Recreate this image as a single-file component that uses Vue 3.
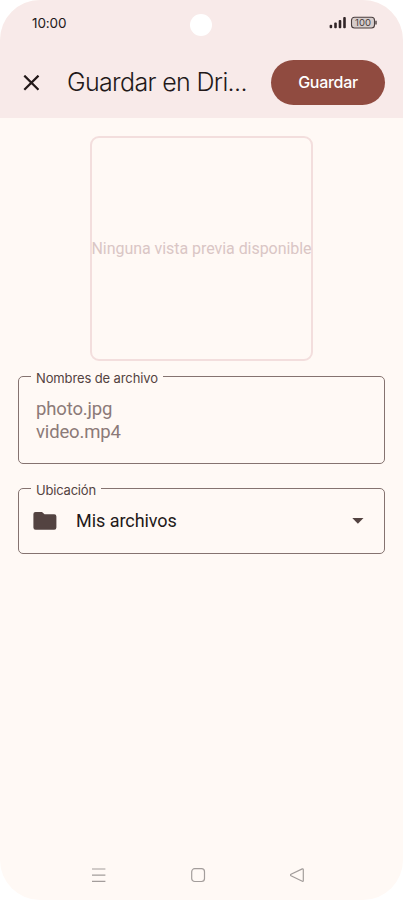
<script setup>
const files = ['photo.jpg', 'video.mp4']
</script>

<template>
  <main class="screen">
    <header class="top">
      <div class="status">
        <span class="time">10:00</span>
        <span class="camera"></span>
        <svg class="indicators" width="49" height="14" viewBox="0 0 49 14">
          <g fill="#302426">
            <rect x="1.6" y="8.8" width="2.6" height="3.4" rx="1" />
            <rect x="6.2" y="6.6" width="2.6" height="5.6" rx="1" />
            <rect x="10.7" y="4" width="2.6" height="8.2" rx="1" />
            <rect x="15.2" y="1" width="2.6" height="11.2" rx="1" />
          </g>
          <rect x="23.5" y="1.2" width="23" height="10.8" rx="3" fill="#d6cccb" stroke="#4a3f3f" stroke-width="1.1" />
          <path d="M48 4.8v3.8" stroke="#4a3f3f" stroke-width="1.4" />
          <text x="35" y="9.9" text-anchor="middle" class="percent">100</text>
        </svg>
      </div>
      <div class="bar">
        <svg class="close" width="17" height="16" viewBox="0 0 17 16">
          <path d="M1.3 0.6l14.2 14.2M15.5 0.6L1.3 14.8" stroke="#231919" stroke-width="2.2" fill="none" />
        </svg>
        <h1>Guardar en Dri...</h1>
        <button class="save">Guardar</button>
      </div>
    </header>

    <section class="content">
      <div class="preview"><span>Ninguna vista previa disponible</span></div>

      <fieldset class="field names">
        <legend>Nombres de archivo</legend>
        <div v-for="file in files" :key="file" class="file">{{ file }}</div>
      </fieldset>

      <fieldset class="field location">
        <legend>Ubicación</legend>
        <div class="row">
          <svg width="24" height="20" viewBox="0 0 24 20">
            <path d="M2.5 1H9l2.5 2.2h9.7a2.2 2.2 0 0 1 2.2 2.2v11.2a2.2 2.2 0 0 1-2.2 2.2H2.6a2.2 2.2 0 0 1-2.2-2.2V3.1A2.1 2.1 0 0 1 2.5 1z" fill="#534341" />
          </svg>
          <span class="place">Mis archivos</span>
          <svg class="arrow" width="12" height="6" viewBox="0 0 12 6">
            <path d="M0.3 0h11.2L5.9 5.8z" fill="#534341" />
          </svg>
        </div>
      </fieldset>
    </section>

    <nav class="nav">
      <svg width="16" height="16" viewBox="0 0 16 16"><path d="M1 2h13.4M1 8.2h13.4M1 14.4h13.4" /></svg>
      <svg width="16" height="16" viewBox="0 0 16 16"><rect x="1.7" y="1.7" width="12.8" height="12.8" rx="3" /></svg>
      <svg width="16" height="16" viewBox="0 0 16 16"><path d="M13.3 1.9L2 7.3q-1 .7 0 1.4l11.3 5.6q1 .3 1-.8V2.7q0-1.1-1-.8z" /></svg>
    </nav>
  </main>
</template>

<style>
body {
  margin: 0;
  background: #fff;
}
</style>

<style scoped>
.screen {
  box-sizing: border-box;
  width: 403px;
  height: 900px;
  display: flex;
  flex-direction: column;
  overflow: hidden;
  border-radius: 40px;
  background: #fff9f5;
  color: #231919;
  font-family: Roboto, "Liberation Sans", sans-serif;
}
.top {
  height: 118px;
  background: #f8eae9;
}
.status {
  display: grid;
  grid-template-columns: 1fr 22px 1fr;
  align-items: center;
  height: 45px;
  padding: 0 26px 0 32px;
}
.time {
  font: 400 13.5px Inter, sans-serif;
  letter-spacing: -0.1px;
}
.camera {
  width: 22px;
  height: 22px;
  margin: 5px 0 0 -4px;
  border-radius: 50%;
  background: #fff;
}
.indicators {
  justify-self: end;
}
.percent {
  font: 400 9.5px Inter, sans-serif;
  fill: #4a3f3f;
}
.bar {
  display: flex;
  align-items: center;
  height: 45px;
  margin-top: 15px;
  padding: 0 18px 0 23px;
}
h1 {
  flex: 1;
  margin: 0 0 0 27px;
  padding-bottom: 1px;
  font: 350 25px/32px Inter, sans-serif;
  letter-spacing: -0.65px;
  white-space: nowrap;
}
.save {
  width: 114px;
  height: 45px;
  border: 0;
  padding: 0 0 1px;
  border-radius: 23px;
  background: #904b40;
  color: #fff;
  font: 500 16px Inter, sans-serif;
  letter-spacing: -0.3px;
}
.content {
  flex: 1;
  display: flex;
  flex-direction: column;
  padding: 18px 18px 0;
}
.preview {
  box-sizing: border-box;
  display: flex;
  align-items: center;
  justify-content: center;
  align-self: center;
  width: 223px;
  height: 225px;
  border: 2px solid #f3dedd;
  border-radius: 9px;
  color: #dac6c5;
  font-size: 16px;
  letter-spacing: -0.05px;
  white-space: nowrap;
}
.field {
  box-sizing: border-box;
  min-width: 0;
  margin: 0;
  border: 1px solid #857370;
  border-radius: 5px;
}
.names {
  height: 96px;
  margin-top: 7px;
  padding: 14px 17px 0;
}
.location {
  height: 74px;
  margin-top: 16px;
  padding: 1px 14px 0;
}
legend {
  margin-left: -5px;
  padding: 4px 5px 0;
  color: #534341;
  font: 400 13px/12px Inter, sans-serif;
  letter-spacing: -0.12px;
}
.location legend {
  margin-left: -2px;
  letter-spacing: -0.2px;
}
.file {
  color: #8c7a78;
  font-size: 18.5px;
  line-height: 22.5px;
  letter-spacing: -0.15px;
}
.row {
  display: flex;
  align-items: center;
  height: 48px;
}
.place {
  flex: 1;
  margin-left: 19px;
  font-size: 18px;
  line-height: 22px;
  letter-spacing: -0.05px;
}
.arrow {
  margin-right: 6px;
}
.nav {
  display: flex;
  justify-content: space-between;
  height: 33px;
  padding: 0 98px 0 91px;
}
.nav svg {
  fill: none;
  stroke: #a39d9b;
  stroke-width: 1.2;
}
</style>
